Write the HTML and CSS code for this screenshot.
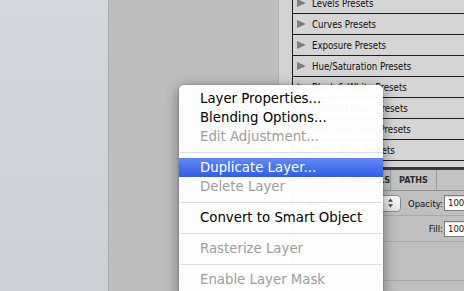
FILE: index.html
```html
<!DOCTYPE html>
<html lang="en">
<head>
    <meta charset="UTF-8">
    <meta name="viewport" content="width=device-width, initial-scale=1.0">
    <title>Layer Context Menu</title>
    <link rel="stylesheet" href="styles.css">
</head>
<body>
    <div class="workspace">
        <div class="sidebar"></div>
        <div class="canvas"></div>
        <div class="dock-strip"></div>

        <div class="dock">
            <!-- Adjustment presets -->
            <div class="presets">
                <div class="preset-list">
                    <div class="preset"><span class="arrow"></span>Levels Presets</div>
                    <div class="preset"><span class="arrow"></span>Curves Presets</div>
                    <div class="preset"><span class="arrow"></span>Exposure Presets</div>
                    <div class="preset"><span class="arrow"></span>Hue/Saturation Presets</div>
                    <div class="preset"><span class="arrow"></span>Black &amp; White Presets</div>
                    <div class="preset"><span class="arrow"></span>Channel Mixer Presets</div>
                    <div class="preset"><span class="arrow"></span>Selective Color Presets</div>
                    <div class="preset"><span class="arrow"></span>Photo Filter Presets</div>
                    <div class="preset"></div>
                </div>
            </div>

            <!-- Layers panel -->
            <div class="tabs">
                <div class="tab tab-layers">LAYERS</div>
                <div class="tab tab-channels">CHANNELS</div>
                <div class="tab tab-paths">PATHS</div>
            </div>

            <div class="layer-options">
                <div class="option-row">
                    <div class="blend-cell">
                        <div class="blend-select">
                            <span>Normal</span>
                            <svg class="blend-arrows" width="7" height="10" viewBox="0 0 7 10">
                                <path d="M3.5 0.5 L6 3.8 L1 3.8 Z" fill="#4a4a4a"/>
                                <path d="M3.5 9.5 L6 6.2 L1 6.2 Z" fill="#4a4a4a"/>
                            </svg>
                        </div>
                    </div>
                    <label class="option-label">Opacity:</label>
                    <div class="field">100%</div>
                </div>
                <div class="option-row">
                    <div class="blend-cell"></div>
                    <label class="option-label">Fill:</label>
                    <div class="field">100%</div>
                </div>
                <div class="layer-list"></div>
            </div>
        </div>
    </div>

    <!-- Context menu -->
    <ul class="context-menu">
        <li class="menu-item">Layer Properties...</li>
        <li class="menu-item">Blending Options...</li>
        <li class="menu-item disabled">Edit Adjustment...</li>
        <li class="menu-separator"></li>
        <li class="menu-item active">Duplicate Layer...</li>
        <li class="menu-item disabled">Delete Layer</li>
        <li class="menu-separator"></li>
        <li class="menu-item">Convert to Smart Object</li>
        <li class="menu-separator"></li>
        <li class="menu-item disabled">Rasterize Layer</li>
        <li class="menu-separator"></li>
        <li class="menu-item disabled">Enable Layer Mask</li>
    </ul>
</body>
</html>
```

FILE: styles.css
```css
/* General Layout */
* {
    box-sizing: border-box;
}

body {
    margin: 0;
    width: 464px;
    height: 291px;
    overflow: hidden;
    position: relative;
    font-family: "DejaVu Sans", sans-serif;
    background-color: #bebebe;
}

.workspace {
    display: flex;
    height: 291px;
}

/* Left sidebar and canvas */
.sidebar {
    width: 109px;
    flex-shrink: 0;
    background: linear-gradient(#d2d8de, #cad0d6);
    border-right: 1px solid #a4a9ae;
}

.canvas {
    width: 169px;
    flex-shrink: 0;
    background-color: #bebebe;
}

.dock-strip {
    width: 14px;
    flex-shrink: 0;
    background-color: #d3d3d3;
    border-left: 1px solid #b2b2b2;
}

/* Dock */
.dock {
    width: 172px;
    flex-shrink: 0;
    overflow: hidden;
    border-left: 1px solid #1c1c1c;
    display: flex;
    flex-direction: column;
    font-family: "DejaVu Sans Condensed", "DejaVu Sans", sans-serif;
    font-stretch: condensed;
}

.presets {
    height: 167px;
    overflow: hidden;
    background-color: #d5d5d5;
}

.preset-list {
    margin-top: -7px;
}

.preset {
    height: 21px;
    border-bottom: 1px solid #1e1e1e;
    display: flex;
    align-items: center;
    font-size: 9.6px;
    color: #0e0e0e;
    white-space: nowrap;
}

.arrow {
    width: 0;
    height: 0;
    margin: 0 6px 0 4px;
    border-left: 9px solid #7e7e7e;
    border-top: 4.5px solid transparent;
    border-bottom: 4.5px solid transparent;
}

/* Tabs */
.tabs {
    display: flex;
    height: 24px;
    background-color: #c3c3c3;
    border-top: 3px solid #3a3a3a;
    border-bottom: 1px solid #929292;
}

.tab {
    display: flex;
    align-items: center;
    justify-content: center;
    border-right: 1px solid #999;
    font-size: 9px;
    font-weight: bold;
    color: #2c2c2c;
}

.tab-layers {
    width: 48px;
}

.tab-channels {
    width: 50px;
}

.tab-paths {
    width: 46px;
}

/* Layer options */
.layer-options {
    flex: 1;
    background-color: #bfbfbf;
}

.option-row {
    display: grid;
    grid-template-columns: 113px 36px 60px;
    column-gap: 1px;
    align-items: center;
    height: 26px;
    border-bottom: 1px solid #a9a9a9;
}

.option-row:first-child {
    height: 25px;
}

.blend-select {
    margin-left: 7px;
    width: 101px;
    height: 17px;
    border: 1px solid #8a8a8a;
    border-radius: 4px;
    background: linear-gradient(#fbfbfb, #e2e2e2);
    display: flex;
    align-items: center;
    justify-content: space-between;
    padding: 0 6px 0 5px;
    font-size: 9.5px;
    color: #222;
}

.option-label {
    justify-self: end;
    font-size: 9.5px;
    color: #111;
    white-space: nowrap;
}

.field {
    height: 16px;
    border: 1px solid #7c7c7c;
    background-color: #fff;
    box-shadow: inset 0 1px 1px rgba(0, 0, 0, 0.15);
    font-size: 9.5px;
    line-height: 14px;
    padding-left: 3px;
    color: #111;
}

.layer-list {
    height: 39px;
    border-bottom: 1px solid #a9a9a9;
}

/* Context menu */
.context-menu {
    position: absolute;
    left: 179px;
    top: 85px;
    width: 204px;
    margin: 0;
    padding: 4px 0 8px;
    list-style: none;
    background-color: rgba(255, 255, 255, 0.97);
    border-radius: 5px 5px 0 0;
    box-shadow: 0 3px 14px rgba(0, 0, 0, 0.45), 0 0 0 1px rgba(0, 0, 0, 0.08);
    font-family: "DejaVu Sans", sans-serif;
}

.menu-item {
    height: 19px;
    line-height: 19px;
    padding-left: 21px;
    font-size: 13.3px;
    color: #000;
    white-space: nowrap;
}

.menu-item.disabled {
    color: #9e9e9e;
}

.menu-item.active {
    color: #fff;
    background: linear-gradient(#628af4, #2f5de9);
    box-shadow: inset 0 1px 0 #5a82f1;
}

.menu-separator {
    height: 12px;
    padding: 6px 1px 0;
}

.menu-separator::before {
    content: "";
    display: block;
    height: 1px;
    background-color: #dddddd;
}
```
